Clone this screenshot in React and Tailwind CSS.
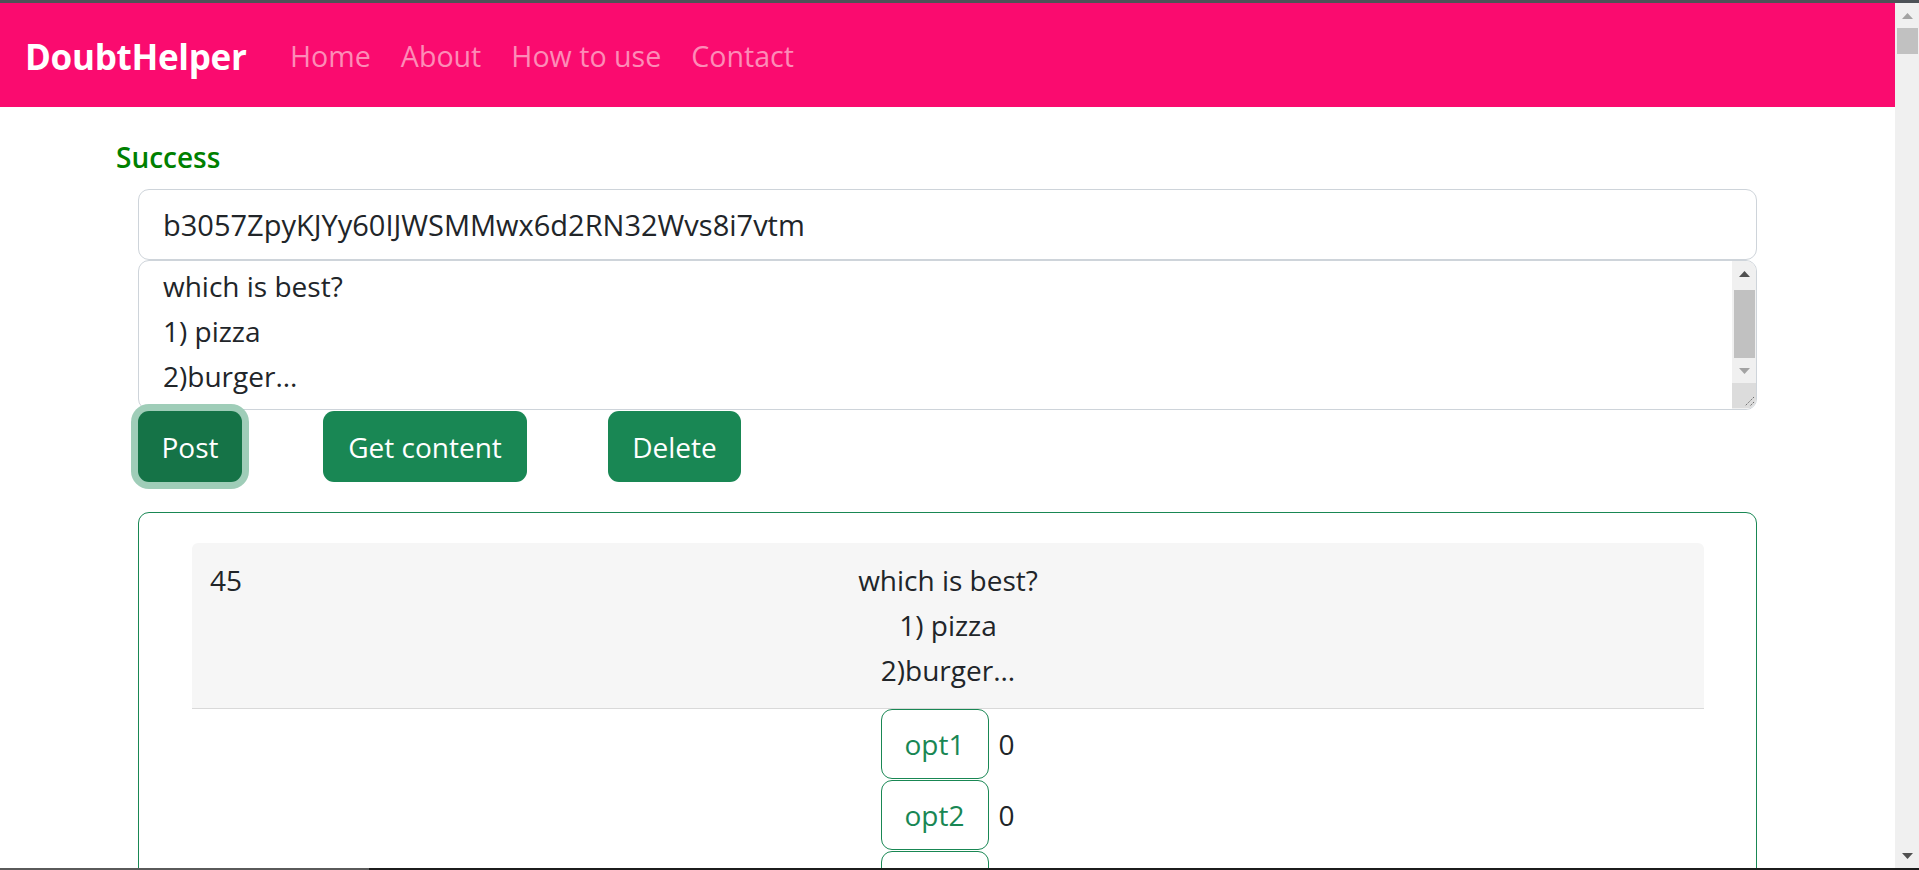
import React from "react";

const links = ["Home", "About", "How to use", "Contact"];

function UpArrow({ color }) {
  return (
    <div className="flex h-[25px] items-center justify-center">
      <svg width="11" height="6" viewBox="0 0 11 6">
        <path d="M0 6 L5.5 0 L11 6 Z" fill={color} />
      </svg>
    </div>
  );
}

function DownArrow({ color }) {
  return (
    <div className="flex h-[25px] items-center justify-center">
      <svg width="11" height="6" viewBox="0 0 11 6">
        <path d="M0 0 L5.5 6 L11 0 Z" fill={color} />
      </svg>
    </div>
  );
}

function PageScrollbar() {
  return (
    <div className="flex w-[24px] shrink-0 flex-col bg-[#f0f0f0]">
      <UpArrow color="#a3a3a3" />
      <div className="ml-[2px] mr-[1px] h-[26px] bg-[#c1c1c1]" />
      <div className="flex-1" />
      <DownArrow color="#505050" />
    </div>
  );
}

function FakeTextarea() {
  return (
    <div className="flex h-[150px] overflow-hidden rounded-[11px] border border-[#ced4da] bg-white">
      <div className="flex-1 pl-[24px] pt-[3px] text-[28px] leading-[45px]">
        <div>which is best?</div>
        <div>1) pizza</div>
        <div>2)burger...</div>
      </div>
      <div className="flex w-[24px] flex-col bg-[#f0f0f0]">
        <UpArrow color="#505050" />
        <div className="ml-[2px] mr-[1px] mt-[4px] h-[68px] bg-[#c1c1c1]" />
        <DownArrow color="#a3a3a3" />
        <div className="h-[25px] bg-[#dcdcdc]">
          <svg width="24" height="25" viewBox="0 0 24 25">
            <path d="M22 14 L13 23 M22 19 L18 23" stroke="#6e6e6e" strokeWidth="1" strokeDasharray="1.5 1" />
          </svg>
        </div>
      </div>
    </div>
  );
}

function OptionRow({ label, count }) {
  return (
    <div className="flex items-baseline gap-[10px]">
      <button
        type="button"
        className="h-[70px] w-[108px] rounded-[11px] border border-[#198754] bg-white text-[28px] leading-[45px] text-[#198754]"
      >
        {label}
      </button>
      <span className="w-[11px] text-[28px] leading-[45px]">{count}</span>
    </div>
  );
}

export default function App() {
  return (
    <div className="flex h-[870px] flex-col overflow-hidden bg-white font-['Open_Sans','Noto_Sans',sans-serif] text-[#212529]">
      <div className="h-[3px] shrink-0 bg-[#4d5257]" />
      <div className="flex min-h-0 flex-1">
        <main className="min-w-0 flex-1 overflow-hidden">
          <nav className="flex h-[104px] items-center bg-[#fa0b6f] pl-[25px]">
            <span className="mt-[4px] w-[250px] text-[35px] font-bold leading-[1.5] tracking-[-0.3px] text-white">
              DoubtHelper
            </span>
            <ul className="flex">
              {links.map((l) => (
                <li key={l} className="px-[15px] text-[28.6px] leading-[45px] text-[#fd8cb7]">
                  {l}
                </li>
              ))}
            </ul>
          </nav>

          <div className="pl-[116px] pr-[138px] pt-[28px]">
            <p className="text-[28px] font-semibold leading-[45px] text-[#008000]">Success</p>

            <div className="ml-[22px] mt-[9px]">
              <div className="flex h-[71px] items-center rounded-[11px] border border-[#ced4da] px-[24px] text-[29px]">
                b3057ZpyKJYy60IJWSMMwx6d2RN32Wvs8i7vtm
              </div>
              <FakeTextarea />

              <div className="mt-px flex gap-[81px]">
                <button
                  type="button"
                  className="h-[71px] w-[104px] rounded-[11px] bg-[#157347] text-[28px] text-white shadow-[0_0_0_7px_#9fcdb8]"
                >
                  Post
                </button>
                <button
                  type="button"
                  className="h-[71px] w-[204px] rounded-[11px] bg-[#198754] text-[28px] text-white"
                >
                  Get content
                </button>
                <button
                  type="button"
                  className="h-[71px] w-[133px] rounded-[11px] bg-[#198754] text-[28px] text-white"
                >
                  Delete
                </button>
              </div>

              <div className="mt-[30px] h-[400px] rounded-[11px] border border-[#198754] pl-[53px] pr-[52px] pt-[30px]">
                <div className="grid grid-cols-[1fr_auto_1fr] rounded-t-[6px] border-b border-[#d9d9d9] bg-[#f6f6f6] px-[18px] pb-[15px] pt-[15px] text-[28px] leading-[45px]">
                  <div>45</div>
                  <div className="text-center">
                    <div>which is best?</div>
                    <div>1) pizza</div>
                    <div>2)burger...</div>
                  </div>
                  <div />
                </div>
                <div className="flex flex-col items-center gap-px pr-[6px]">
                  <OptionRow label="opt1" count="0" />
                  <OptionRow label="opt2" count="0" />
                  <OptionRow label="" count="" />
                </div>
              </div>
            </div>
          </div>
        </main>
        <PageScrollbar />
      </div>
      <div className="flex h-[2px] shrink-0">
        <div className="w-[369px] bg-[#5a5a5a]" />
        <div className="flex-1 bg-[#1c1c1c]" />
      </div>
    </div>
  );
}
